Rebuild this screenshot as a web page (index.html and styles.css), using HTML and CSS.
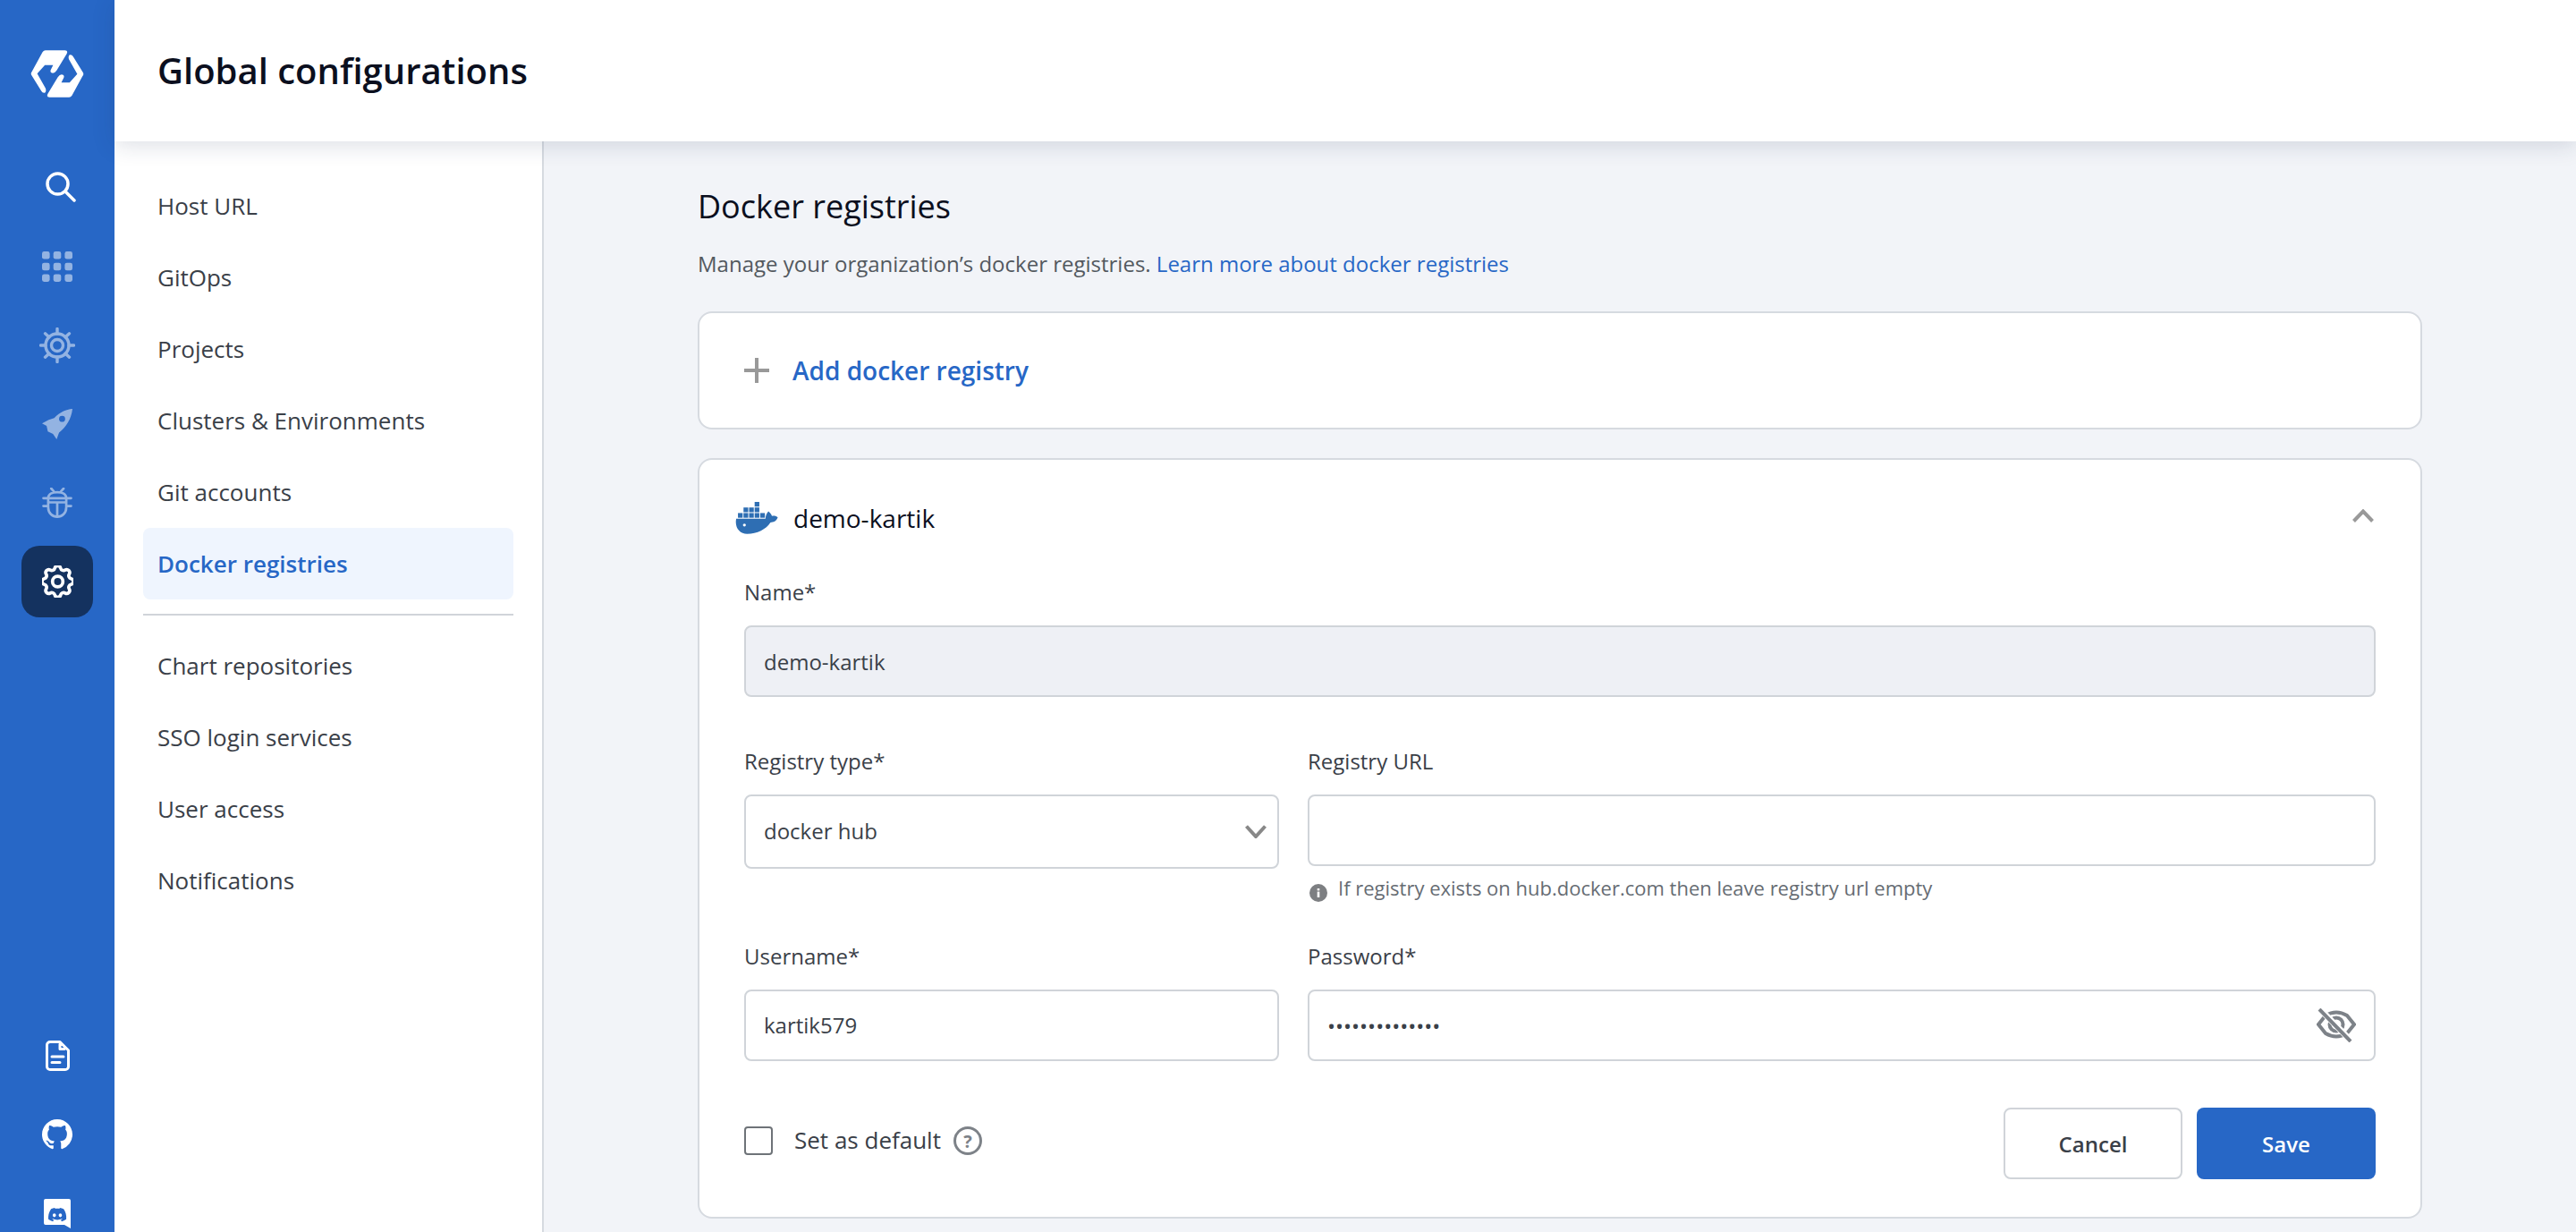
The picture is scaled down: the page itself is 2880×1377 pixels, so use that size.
FILE: index.html
```html
<!DOCTYPE html>
<html lang="en">
<head>
<meta charset="utf-8">
<title>Global configurations</title>
<link rel="stylesheet" href="styles.css">
</head>
<body>
<aside class="rail">
  <div class="rail-logo">
    <svg class="logo" viewBox="102 77 180 161"><g id="lg"><path d="M152 78H218Q230 78 224 90L190 146Q182 158 172 154Q166 150 172 140L178 128H150L124 157L152 206Q156 216 150 222Q142 224 138 216L106 164Q100 157 106 150L142 84Q146 78 152 78Z"/></g><g transform="rotate(180 192 157.5)"><path d="M152 78H218Q230 78 224 90L190 146Q182 158 172 154Q166 150 172 140L178 128H150L124 157L152 206Q156 216 150 222Q142 224 138 216L106 164Q100 157 106 150L142 84Q146 78 152 78Z"/></g></svg>
  </div>
  <div class="rail-item">
    <svg class="ic ic-search" viewBox="0 0 34 34"><circle cx="13.5" cy="13.5" r="11.5"/><path d="M22 22L32 32"/></svg>
  </div>
  <div class="rail-item">
    <svg class="ic-dim ic-grid" viewBox="0 0 34 34"><rect x="0" y="0" width="8.6" height="8.6" rx="2.4"/><rect x="12.7" y="0" width="8.6" height="8.6" rx="2.4"/><rect x="25.4" y="0" width="8.6" height="8.6" rx="2.4"/><rect x="0" y="12.7" width="8.6" height="8.6" rx="2.4"/><rect x="12.7" y="12.7" width="8.6" height="8.6" rx="2.4"/><rect x="25.4" y="12.7" width="8.6" height="8.6" rx="2.4"/><rect x="0" y="25.4" width="8.6" height="8.6" rx="2.4"/><rect x="12.7" y="25.4" width="8.6" height="8.6" rx="2.4"/><rect x="25.4" y="25.4" width="8.6" height="8.6" rx="2.4"/></svg>
  </div>
  <div class="rail-item">
    <svg class="ic-line ic-helm" viewBox="0 0 40 40"><circle cx="20" cy="20" r="6.5"/><circle cx="20" cy="20" r="13"/><path d="M20 7V1.5M20 33V38.5M7 20H1.5M33 20H38.5M10.8 10.8L6.5 6.8M29.2 10.8L33.5 6.8M10.8 29.2L6.5 33.2M29.2 29.2L33.5 33.2"/></svg>
  </div>
  <div class="rail-item">
    <svg class="ic-dim ic-rocket" viewBox="112 112 100 100"><path fill-rule="evenodd" d="M212 112C190 114 172 122 152 142L134 148L112 160L127 168L131 186L148 194L160 212L168 190C192 170 208 146 212 112ZM178 135A10 10 0 1 0 178 155A10 10 0 1 0 178 135Z"/></svg>
  </div>
  <div class="rail-item">
    <svg class="ic-line ic-bug" viewBox="112 375 100 101"><path d="M142 378L151 388M183 378L174 388M132 410C132 396 146 390 162 390C178 390 192 396 192 410V440C192 460 178 472 162 472C146 472 132 460 132 440ZM132 410H192M116 410H132M192 410H208M116 436H132M192 436H208M136 424H188M162 424V470"/></svg>
  </div>
  <div class="rail-item is-active">
    <svg class="ic ic-gear" viewBox="3 3 18 18"><path d="M10.325 4.317c.426-1.756 2.924-1.756 3.35 0a1.724 1.724 0 002.573 1.066c1.543-.94 3.31.826 2.37 2.37a1.724 1.724 0 001.065 2.572c1.756.426 1.756 2.924 0 3.35a1.724 1.724 0 00-1.066 2.573c.94 1.543-.826 3.31-2.37 2.37a1.724 1.724 0 00-2.572 1.065c-.426 1.756-2.924 1.756-3.35 0a1.724 1.724 0 00-2.573-1.066c-1.543.94-3.31-.826-2.37-2.37a1.724 1.724 0 00-1.065-2.572c-1.756-.426-1.756-2.924 0-3.35a1.724 1.724 0 001.066-2.573c-.94-1.543.826-3.31 2.37-2.37.996.608 2.296.07 2.572-1.065z"/><circle cx="12" cy="12" r="3"/></svg>
  </div>
  <div class="rail-spacer"></div>
  <div class="rail-item">
    <svg class="ic ic-doc" viewBox="0 0 27 34"><path d="M5 1.5H16L25.5 11V29A3.5 3.5 0 0 1 22 32.5H5A3.5 3.5 0 0 1 1.5 29V5A3.5 3.5 0 0 1 5 1.5ZM16 4V9.5H21M7 18H20M7 24.5H16"/></svg>
  </div>
  <div class="rail-item">
    <svg class="ic-solid ic-github" viewBox="0 0 16 16"><path d="M8 0C3.58 0 0 3.58 0 8c0 3.54 2.29 6.53 5.47 7.59.4.07.55-.17.55-.38 0-.19-.01-.82-.01-1.49-2.01.37-2.53-.49-2.69-.94-.09-.23-.48-.94-.82-1.13-.28-.15-.68-.52-.01-.53.63-.01 1.08.58 1.23.82.72 1.21 1.87.87 2.33.66.07-.52.28-.87.51-1.07-1.78-.2-3.64-.89-3.64-3.95 0-.87.31-1.59.82-2.15-.08-.2-.36-1.02.08-2.12 0 0 .67-.21 2.2.82.64-.18 1.32-.27 2-.27.68 0 1.36.09 2 .27 1.53-1.04 2.2-.82 2.2-.82.44 1.1.16 1.92.08 2.12.51.56.82 1.27.82 2.15 0 3.07-1.87 3.75-3.65 3.95.29.25.54.73.54 1.48 0 1.07-.01 1.93-.01 2.2 0 .21.15.46.55.38A8.013 8.013 0 0016 8c0-4.42-3.58-8-8-8z"/></svg>
  </div>
  <div class="rail-item">
    <svg class="ic-discord" viewBox="0 0 30 33"><path class="bubble" d="M2 0H28A2 2 0 0 1 30 2V33L23 29H2A2 2 0 0 1 0 27V2A2 2 0 0 1 2 0Z"/><g transform="translate(5 7.5) scale(.84)"><path class="face" d="M20.317 4.3698a19.7913 19.7913 0 00-4.8851-1.5152.0741.0741 0 00-.0785.0371c-.211.3753-.4447.8648-.6083 1.2495-1.8447-.2762-3.68-.2762-5.4868 0-.1636-.3933-.4058-.8742-.6177-1.2495a.077.077 0 00-.0785-.037 19.7363 19.7363 0 00-4.8852 1.515.0699.0699 0 00-.0321.0277C.5334 9.0458-.319 13.5799.0992 18.0578a.0824.0824 0 00.0312.0561c2.0528 1.5076 4.0413 2.4228 5.9929 3.0294a.0777.0777 0 00.0842-.0276c.4616-.6304.8731-1.2952 1.226-1.9942a.076.076 0 00-.0416-.1057c-.6528-.2476-1.2743-.5495-1.8722-.8923a.077.077 0 01-.0076-.1277c.1258-.0943.2517-.1923.3718-.2914a.0743.0743 0 01.0776-.0105c3.9278 1.7933 8.18 1.7933 12.0614 0a.0739.0739 0 01.0785.0095c.1202.099.246.1981.3728.2924a.077.077 0 01-.0066.1276 12.2986 12.2986 0 01-1.873.8914.0766.0766 0 00-.0407.1067c.3604.698.7719 1.3628 1.225 1.9932a.076.076 0 00.0842.0286c1.961-.6067 3.9495-1.5219 6.0023-3.0294a.077.077 0 00.0313-.0552c.5004-5.177-.8382-9.6739-3.5485-13.6604a.061.061 0 00-.0312-.0286zM8.02 15.3312c-1.1825 0-2.1569-1.0857-2.1569-2.419 0-1.3332.9555-2.4189 2.157-2.4189 1.2108 0 2.1757 1.0952 2.1568 2.419 0 1.3332-.9555 2.4189-2.1569 2.4189zm7.9748 0c-1.1825 0-2.1569-1.0857-2.1569-2.419 0-1.3332.9554-2.4189 2.1569-2.4189 1.2108 0 2.1757 1.0952 2.1568 2.419 0 1.3332-.946 2.4189-2.1568 2.4189Z"/></g></svg>
  </div>
</aside>

<div class="shell">
  <header class="topbar"><h1 class="page-title">Global configurations</h1></header>
  <div class="workspace">
    <nav class="side-nav">
      <a class="nav-link">Host URL</a>
      <a class="nav-link">GitOps</a>
      <a class="nav-link">Projects</a>
      <a class="nav-link">Clusters &amp; Environments</a>
      <a class="nav-link">Git accounts</a>
      <a class="nav-link is-current">Docker registries</a>
      <hr class="nav-rule">
      <a class="nav-link">Chart repositories</a>
      <a class="nav-link">SSO login services</a>
      <a class="nav-link">User access</a>
      <a class="nav-link">Notifications</a>
    </nav>
    <main class="content">
      <div class="content-inner">
        <h2 class="section-title">Docker registries</h2>
        <p class="section-sub">Manage your organization’s docker registries. <a class="link">Learn more about docker registries</a></p>

        <div class="card add-card">
          <svg class="plus" viewBox="0 0 28 28"><path d="M14 0V28M0 14H28"/></svg>
          <span class="add-label">Add docker registry</span>
        </div>

        <section class="card form-card">
          <div class="form-head">
            <svg class="docker" viewBox="66 52 144 110"><path d="M68 109H168C168 100 172 90 178 84C184 90 188 94 190 100C198 98 205 100 210 105C205 118 195 122 185 122C170 145 140 161 105 161C80 161 62 140 68 109Z"/><circle class="docker-eye" cx="96" cy="131" r="5"/><rect x="74" y="90" width="16" height="16"/><rect x="93" y="90" width="16" height="16"/><rect x="112" y="90" width="16" height="16"/><rect x="131" y="90" width="16" height="16"/><rect x="150" y="90" width="16" height="16"/><rect x="93" y="71" width="16" height="16"/><rect x="112" y="71" width="16" height="16"/><rect x="131" y="71" width="16" height="16"/><rect x="131" y="52" width="16" height="16"/></svg>
            <span class="form-name">demo-kartik</span>
            <svg class="chev-up" viewBox="0 0 24 15"><path d="M1.5 13.5L12 2.5L22.5 13.5"/></svg>
          </div>

          <div class="field field-name">
            <label class="label">Name*</label>
            <div class="input is-disabled">demo-kartik</div>
          </div>

          <div class="form-grid">
            <div class="field">
              <label class="label">Registry type*</label>
              <div class="input select">
                <span>docker hub</span>
                <svg class="chev-down" viewBox="0 0 24 15"><path d="M1.5 1.5L12 13L22.5 1.5"/></svg>
              </div>
            </div>
            <div class="field">
              <label class="label">Registry URL</label>
              <div class="input"></div>
              <div class="hint">
                <svg class="info" viewBox="0 0 20 20"><circle cx="10" cy="10" r="10"/><rect class="info-i" x="8.7" y="8.6" width="2.6" height="6.4"/><rect class="info-i" x="8.7" y="5" width="2.6" height="2.4"/></svg>
                <span>If registry exists on hub.docker.com then leave registry url empty</span>
              </div>
            </div>
            <div class="field">
              <label class="label">Username*</label>
              <div class="input input-raised">kartik579</div>
            </div>
            <div class="field">
              <label class="label">Password*</label>
              <div class="input password">
                <span class="dots">••••••••••••••</span>
                <svg class="eye" viewBox="0 0 44 38"><path d="M2 18L10 8Q22 1 34 8L42 18L34 28Q22 35 10 28Z"/><circle cx="22" cy="18" r="7.5"/><path class="eye-gap" d="M4 1L39 37"/><path d="M3 1L38 37"/></svg>
              </div>
            </div>
          </div>

          <div class="form-foot">
            <div class="default-opt">
              <span class="checkbox"></span>
              <span class="default-label">Set as default</span>
              <span class="help">?</span>
            </div>
            <div class="actions">
              <button class="btn btn-ghost">Cancel</button>
              <button class="btn btn-primary">Save</button>
            </div>
          </div>
        </section>
      </div>
    </main>
  </div>
</div>
</body>
</html>
```
FILE: styles.css
```css
* { box-sizing: border-box; }
html, body { margin: 0; height: 100%; overflow: hidden; }
body {
  display: flex;
  font-family: "Open Sans", "Noto Sans", sans-serif;
  color: #3a4048;
  background: #f2f4f8;
}

/* left rail */
.rail {
  flex: 0 0 128px;
  height: 100vh;
  background: #2767c6;
  display: flex;
  flex-direction: column;
  align-items: center;
  overflow: hidden;
}
.rail-logo { height: 170px; flex: none; display: flex; align-items: flex-start; justify-content: center; padding-top: 56px; }
.logo { width: 60px; height: 53px; fill: #fff; }
.rail-item {
  flex: none;
  width: 80px;
  height: 80px;
  margin-bottom: 8px;
  border-radius: 20px;
  display: flex;
  align-items: center;
  justify-content: center;
}
.rail-item.is-active { background: #14325f; }
.rail-spacer { flex: none; height: 442px; }
.ic { fill: none; stroke: #fff; stroke-width: 3.5; stroke-linecap: round; stroke-linejoin: round; }
.ic-dim { fill: #fff; opacity: .5; }
.ic-line { fill: none; stroke: #fff; opacity: .5; stroke-linecap: round; stroke-linejoin: round; }
.ic-solid { fill: #fff; }
.ic-search { width: 34px; height: 34px; margin: -2px 0 0 7px; }
.ic-grid { width: 34px; height: 34px; }
.ic-helm { width: 40px; height: 40px; stroke-width: 3.4; }
.ic-rocket { width: 34px; height: 34px; }
.ic-bug { width: 34px; height: 34px; stroke-width: 8; }
.ic-gear { width: 35px; height: 36px; stroke-width: 1.9; }
.ic-doc { width: 27px; height: 34px; stroke-width: 3; }
.ic-github { width: 34px; height: 34px; }
.ic-discord { width: 30px; height: 33px; }
.bubble { fill: #fff; }
.face { fill: #2767c6; }

/* shell */
.shell { flex: 1; min-width: 0; height: 100vh; display: flex; flex-direction: column; }
.topbar {
  position: relative;
  z-index: 2;
  flex: 0 0 158px;
  background: #fff;
  box-shadow: 0 4px 24px rgba(30, 50, 90, .16);
  display: flex;
  align-items: center;
  padding: 0 48px;
}
.page-title { margin: 0; font-size: 40px; font-weight: 600; color: #0b0f1e; line-height: 56px; }
.workspace { flex: 1; min-height: 0; display: flex; }

/* side nav */
.side-nav {
  flex: 0 0 480px;
  background: #fff;
  border-right: 2px solid #d6dae0;
  padding: 32px 32px 0;
  display: flex;
  flex-direction: column;
}
.nav-link {
  flex: none;
  height: 80px;
  padding: 0 16px;
  border-radius: 8px;
  display: flex;
  align-items: center;
  font-size: 26px;
  color: #3a4048;
}
.nav-link.is-current { background: #eff5fe; color: #2767c6; font-weight: 600; }
.nav-rule { flex: none; width: 100%; height: 2px; margin: 16px 0; border: 0; background: #d0d4d9; }

/* content */
.content { flex: 1; min-width: 0; display: flex; justify-content: center; overflow: hidden; }
.content-inner { width: 1928px; padding-top: 48px; }
.section-title { margin: 0; font-size: 36px; font-weight: 400; line-height: 50px; color: #0b0f1e; }
.section-sub { margin: 19px 0 33px; font-size: 24px; line-height: 40px; color: #53595f; }
.link { color: #2767c6; }
.card { background: #fff; border: 2px solid #d6dae0; border-radius: 16px; }
.add-card { height: 132px; display: flex; align-items: center; padding-left: 50px; margin-bottom: 32px; }
.plus { width: 28px; height: 28px; fill: none; stroke: #999; stroke-width: 4; margin-right: 26px; }
.add-label { font-size: 28px; font-weight: 600; color: #2767c6; }

.form-card { height: 850px; padding: 0 50px; }
.form-head { height: 130px; display: flex; align-items: center; margin-left: -10px; }
.docker { width: 48px; height: 36px; fill: #2e6eb3; margin-right: 17px; }
.docker-eye { fill: #fff; }
.form-name { font-size: 28px; color: #0b0f1e; }
.chev-up { width: 24px; height: 15px; margin-left: auto; margin-right: 2px; margin-bottom: 5px; fill: none; stroke: #999; stroke-width: 4; }
.field-name { margin-bottom: 54px; }
.label { display: block; font-size: 24px; line-height: 36px; margin-bottom: 19px; color: #3a4048; }
.input {
  height: 80px;
  border: 2px solid #d0d4d9;
  border-radius: 8px;
  background: #fff;
  padding: 0 20px;
  display: flex;
  align-items: center;
  font-size: 24px;
  color: #3a4048;
}
.input.is-disabled { background: #eef0f5; }
.input-raised { padding-bottom: 2px; }
.select { height: 83px; justify-content: space-between; padding: 0 12px 3px 20px; }
.chev-down { width: 24px; height: 15px; margin-top: 3px; fill: none; stroke: #888; stroke-width: 4; }
.form-grid { display: grid; grid-template-columns: 598px 1fr; column-gap: 32px; row-gap: 43px; }
.hint { display: flex; align-items: center; margin-top: 8px; height: 32px; font-size: 22px; color: #666c73; }
.info { width: 20px; height: 20px; margin: 12px 12px 0 2px; fill: #7d7f82; flex: none; }
.info-i { fill: #fff; }
.password { justify-content: space-between; padding-right: 20px; }
.dots { font-size: 24px; letter-spacing: 0; color: #3a4048; }
.eye { width: 44px; height: 38px; fill: none; stroke: #7d8288; stroke-width: 4; flex: none; }
.eye-gap { stroke: #fff; stroke-width: 7; }

.form-foot { display: flex; justify-content: space-between; align-items: center; margin-top: 52px; }
.default-opt { display: flex; align-items: center; padding-bottom: 6px; }
.checkbox { width: 32px; height: 32px; border: 2px solid #6e7378; border-radius: 4px; margin-right: 24px; background: #fff; }
.default-label { font-size: 26px; color: #3a4048; margin-right: 14px; padding-bottom: 2px; }
.help {
  width: 32px;
  height: 32px;
  border: 3px solid #7d8288;
  border-radius: 50%;
  display: flex;
  align-items: center;
  justify-content: center;
  font-size: 20px;
  font-weight: 700;
  color: #7d8288;
}
.actions { display: flex; gap: 16px; }
.btn { width: 200px; height: 80px; border-radius: 8px; font-family: inherit; font-size: 24px; font-weight: 600; padding: 0; }
.btn-ghost { background: #fff; border: 2px solid #d0d4d9; color: #3a4048; }
.btn-primary { background: #2767c6; border: 0; color: #fff; }
```
